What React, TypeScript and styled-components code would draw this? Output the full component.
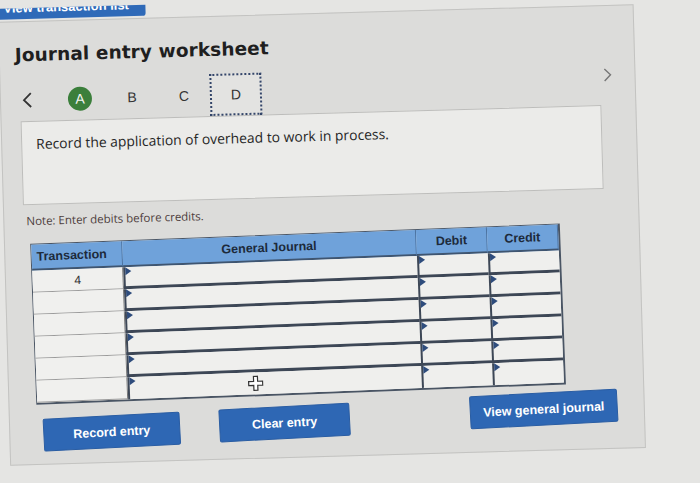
import React from "react";
import styled, { createGlobalStyle } from "styled-components";

const Global = createGlobalStyle`
  html, body { margin: 0; padding: 0; background: #e5e5e3; overflow: hidden; }
  #root { width: 700px; height: 483px; overflow: hidden; }
`;

const Stage = styled.div`
  width: 700px;
  height: 483px;
  transform: rotate(-1.6deg);
  transform-origin: 320px 240px;
  font-family: "Liberation Sans", Arial, sans-serif;
  color: #222;
`;

const TopButton = styled.div`
  width: 152px;
  height: 11px;
  background: #2f6ab8;
  border-radius: 0 0 3px 0;
  overflow: hidden;
  color: #fff;
  font-weight: 700;
  font-size: 13px;
  line-height: 0;
  padding-left: 10px;
  box-sizing: border-box;
`;

const Panel = styled.div`
  margin-top: 2px;
  margin-left: 4px;
  width: 636px;
  height: 444px;
  box-sizing: border-box;
  background: #dcdcda;
  border: 1px solid #c3c3c1;
  padding: 21px 15px 0 15px;
`;

const Title = styled.h1`
  margin: 0;
  font-family: "DejaVu Sans", Verdana, sans-serif;
  font-weight: 700;
  font-size: 18.5px;
  line-height: 24px;
  color: #1f1f1f;
  letter-spacing: 0.1px;
`;

const NavRow = styled.div`
  margin-top: 12px;
  height: 42px;
  display: flex;
  align-items: center;
`;

const Chevron = styled.div<{ $muted?: boolean }>`
  width: 24px;
  display: flex;
  justify-content: center;
  align-self: ${(p) => (p.$muted ? "flex-start" : "center")};
  margin-top: ${(p) => (p.$muted ? "4px" : "0")};
  margin-left: ${(p) => (p.$muted ? "auto" : "0")};
  color: ${(p) => (p.$muted ? "#777" : "#333")};
`;

const Steps = styled.div`
  margin-left: 14px;
  display: flex;
  align-items: center;
  height: 100%;
`;

const Step = styled.div<{ $current?: boolean }>`
  width: 52px;
  height: 42px;
  box-sizing: border-box;
  display: flex;
  align-items: center;
  justify-content: center;
  font-size: 14px;
  color: #333;
  border: ${(p) => (p.$current ? "2px dotted #34466a" : "2px solid transparent")};
  background: ${(p) => (p.$current ? "#e3e3e1" : "transparent")};
`;

const DoneBadge = styled.span`
  width: 24px;
  height: 24px;
  border-radius: 50%;
  background: #3b7f3b;
  color: #f4f4f4;
  display: flex;
  align-items: center;
  justify-content: center;
  font-size: 14px;
`;

const Prompt = styled.div`
  margin-left: 4px;
  width: 581px;
  height: 84px;
  box-sizing: border-box;
  background: #ebebe9;
  border: 1px solid #bdbdbb;
  padding: 12px 14px;
  font-family: "Open Sans", "Noto Sans", sans-serif;
  font-size: 13.9px;
  line-height: 20px;
  color: #262626;
`;

const Note = styled.div`
  margin-top: 8px;
  margin-left: 7px;
  font-family: "Open Sans", "Noto Sans", sans-serif;
  font-size: 11.5px;
  line-height: 16px;
  color: #4d3c3c;
`;

const Grid = styled.div`
  margin-top: 12px;
  margin-left: 11px;
  width: 527px;
  display: grid;
  grid-template-columns: 91px 294px 71px 71px;
  grid-template-rows: 26px repeat(6, 22px);
  border: 1px solid #4a5564;
  border-right-width: 2px;
  border-bottom-width: 2px;
  background: #efefed;
  transform: rotate(-0.6deg);
`;

const Head = styled.div<{ $align?: string }>`
  background: #6fa2da;
  border-right: 1px solid #4d73a0;
  border-bottom: 2px solid #3f5570;
  display: flex;
  align-items: center;
  justify-content: ${(p) => p.$align || "center"};
  padding: 0 5px;
  font-weight: 700;
  font-size: 12.5px;
  color: #1d2a3a;
  &:last-child { border-right: none; }
`;

const TxCell = styled.div`
  border-bottom: 1px solid #9b9b9b;
  border-right: 1px solid #777;
  display: flex;
  align-items: center;
  justify-content: center;
  font-size: 12px;
  color: #333;
  background: #f0f0ee;
`;

const InputCell = styled.div<{ $last?: boolean }>`
  position: relative;
  background: #efefed;
  border-left: 2px solid #3d4756;
  border-bottom: ${(p) => (p.$last ? "0" : "3px solid #3d4756")};
  &::before {
    content: "";
    position: absolute;
    left: 0;
    top: 0;
    border-top: 4px solid transparent;
    border-bottom: 4px solid transparent;
    border-left: 6px solid #2e4c7c;
  }
`;

const Cursor = styled.svg`
  position: absolute;
  left: 118px;
  top: 3px;
`;

const Actions = styled.div`
  margin-top: 10px;
  display: flex;
  align-items: center;
  transform: rotate(-1.4deg);
`;

const ActionButton = styled.button<{ $w: number; $gap: number }>`
  width: ${(p) => p.$w}px;
  height: 33px;
  margin-left: ${(p) => p.$gap}px;
  background: #2e67b4;
  border: 1px solid #2a5da3;
  border-radius: 2px;
  color: #fff;
  font-family: "Liberation Sans", Arial, sans-serif;
  font-weight: 700;
  font-size: 12.5px;
  cursor: pointer;
`;

const LeftIcon = () => (
  <svg width="14" height="18" viewBox="0 0 14 18">
    <path d="M10 2 L3 9 L10 16" fill="none" stroke="currentColor" strokeWidth="1.8" />
  </svg>
);

const RightIcon = () => (
  <svg width="12" height="16" viewBox="0 0 12 16">
    <path d="M3 2 L9 8 L3 14" fill="none" stroke="currentColor" strokeWidth="1.4" />
  </svg>
);

const rows = [0, 1, 2, 3, 4, 5];

export default function App() {
  return (
    <>
      <Global />
      <Stage>
        <TopButton>View transaction list</TopButton>
        <Panel>
          <Title>Journal entry worksheet</Title>
          <NavRow>
            <Chevron>
              <LeftIcon />
            </Chevron>
            <Steps>
              <Step>
                <DoneBadge>A</DoneBadge>
              </Step>
              <Step>B</Step>
              <Step>C</Step>
              <Step $current>D</Step>
            </Steps>
            <Chevron $muted>
              <RightIcon />
            </Chevron>
          </NavRow>
          <Prompt>Record the application of overhead to work in process.</Prompt>
          <Note>Note: Enter debits before credits.</Note>
          <Grid>
            <Head $align="flex-start">Transaction</Head>
            <Head>General Journal</Head>
            <Head>Debit</Head>
            <Head>Credit</Head>
            {rows.map((r) => (
              <React.Fragment key={r}>
                <TxCell>{r === 0 ? "4" : ""}</TxCell>
                <InputCell $last={r === 5}>
                  {r === 5 && (
                    <Cursor width="16" height="16" viewBox="0 0 16 16">
                      <path
                        d="M6 1 H10 V6 H15 V10 H10 V15 H6 V10 H1 V6 H6 Z"
                        fill="#fff"
                        stroke="#333"
                        strokeWidth="1.2"
                      />
                    </Cursor>
                  )}
                </InputCell>
                <InputCell $last={r === 5} />
                <InputCell $last={r === 5} />
              </React.Fragment>
            ))}
          </Grid>
          <Actions>
            <ActionButton $w={137} $gap={18}>Record entry</ActionButton>
            <ActionButton $w={131} $gap={39}>Clear entry</ActionButton>
            <ActionButton $w={148} $gap={120}>View general journal</ActionButton>
          </Actions>
        </Panel>
      </Stage>
    </>
  );
}
